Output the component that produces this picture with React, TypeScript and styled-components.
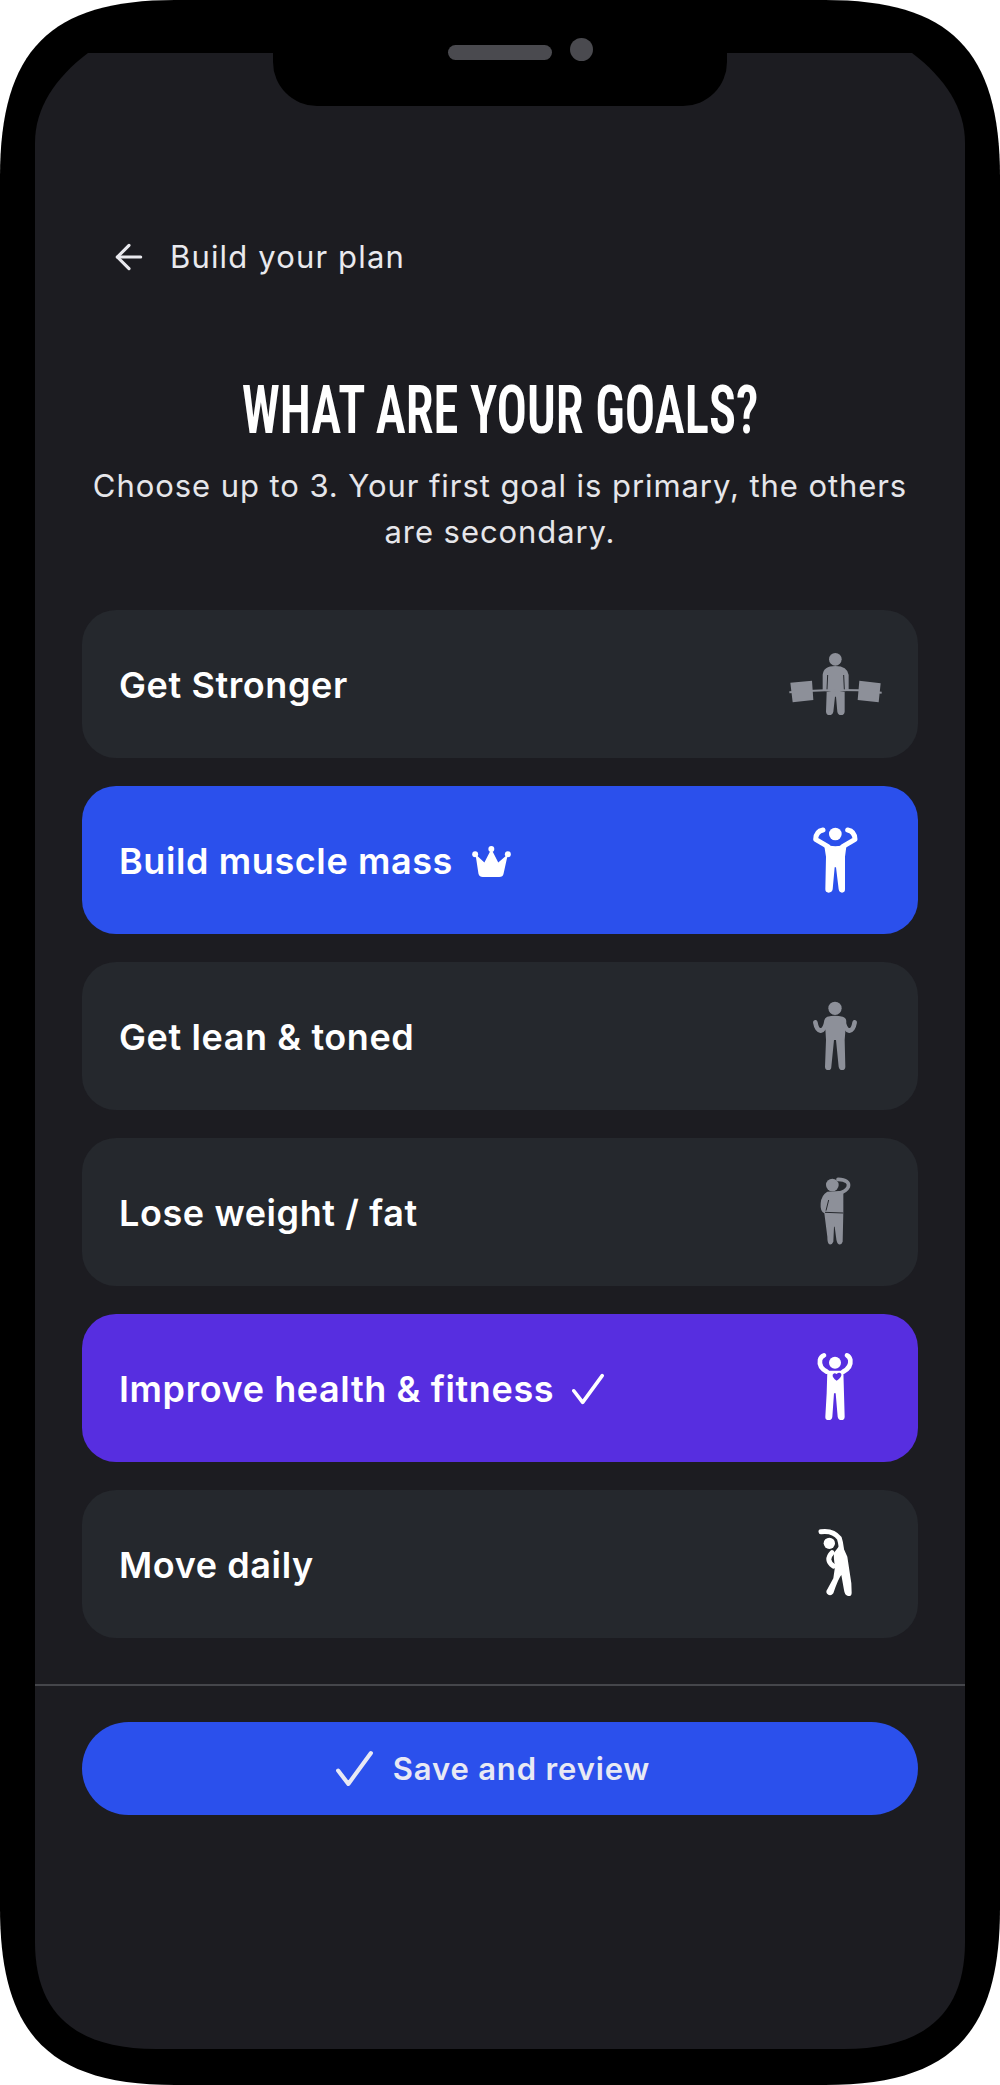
import React from 'react';
import styled, { createGlobalStyle } from 'styled-components';
import { ArrowLeft } from 'lucide-react';

const GlobalStyle = createGlobalStyle`
  html, body {
    margin: 0;
    padding: 0;
    background: #fff;
  }
  #root {
    width: 1000px;
    height: 2085px;
  }
`;

const Phone = styled.div`
  position: relative;
  width: 1000px;
  height: 2085px;
  box-sizing: border-box;
  padding: 53px 35px 36px;
  background: #000;
  clip-path: path('M175 0 L825 0 C950 0 1000 50 1000 177 L1000 1908 C1000 2035 950 2085 825 2085 L175 2085 C50 2085 0 2035 0 1908 L0 177 C0 50 50 0 175 0 Z');
`;

const Screen = styled.main`
  height: 100%;
  display: flex;
  flex-direction: column;
  background: #1c1c21;
  clip-path: path('M53 0 L877 0 C910 25 930 55 930 90 L930 1889 C930 1960 890 1996 809 1996 L121 1996 C40 1996 0 1960 0 1889 L0 90 C0 55 20 25 53 0 Z');
`;

const Notch = styled.div`
  position: absolute;
  top: 53px;
  left: 273px;
  width: 454px;
  height: 53px;
  background: #000;
  border-radius: 0 0 44px 44px;
`;

const Speaker = styled.div`
  position: absolute;
  top: 45px;
  left: 448px;
  width: 104px;
  height: 15px;
  border-radius: 8px;
  background: #4a4a4f;
`;

const Camera = styled.div`
  position: absolute;
  top: 38px;
  left: 570px;
  width: 23px;
  height: 23px;
  border-radius: 50%;
  background: #4a4a4f;
`;

const BackRow = styled.header`
  display: flex;
  align-items: center;
  gap: 21px;
  height: 46px;
  margin-top: 181px;
  padding-left: 74px;
  color: #e9e9ee;
  font: 400 31px/46px Inter, sans-serif;
  letter-spacing: 1.15px;
`;

const Title = styled.h1`
  margin: 94px 0 0;
  text-align: center;
  color: #fff;
  font: 600 67px/72px Roboto, sans-serif;
  font-stretch: 75%;
  white-space: nowrap;
  transform: scaleX(0.755);
`;

const Subtitle = styled.p`
  margin: 17px 48px 0;
  text-align: center;
  color: #e6e6ea;
  font: 400 31px/46px Inter, sans-serif;
  letter-spacing: 0.93px;
`;

const GoalList = styled.ul`
  list-style: none;
  display: flex;
  flex-direction: column;
  gap: 28px;
  margin: 55px 0 0;
  padding: 0 47px;
`;

const Goal = styled.li<{ $tone: 'plain' | 'primary' | 'secondary' }>`
  display: flex;
  align-items: center;
  justify-content: space-between;
  height: 148px;
  padding: 0 33px 0 37px;
  border-radius: 34px;
  background: ${p => (p.$tone === 'primary' ? '#2b50ec' : p.$tone === 'secondary' ? '#572ee0' : '#25282d')};
`;

const GoalLabel = styled.span`
  display: flex;
  align-items: center;
  gap: 18px;
  padding-top: 2px;
  color: #fff;
  font: 600 36px/44px Inter, sans-serif;
  letter-spacing: 0.6px;
`;

const FigureIcon = styled.svg<{ $color: string }>`
  display: block;
  width: 100px;
  height: 80px;
  color: ${p => p.$color};
  fill: currentColor;
`;

const Divider = styled.hr`
  height: 2px;
  margin: 46px 0 0;
  border: 0;
  background: #45464b;
`;

const SaveButton = styled.button`
  display: flex;
  align-items: center;
  justify-content: center;
  gap: 20px;
  height: 93px;
  margin: 36px 47px 0;
  padding: 0 14px 0 0;
  border: 0;
  border-radius: 47px;
  background: #2b50ec;
  color: #e8e9f4;
  font: 600 31px/40px Inter, sans-serif;
  letter-spacing: 0.85px;
`;

const GRAY = '#8d9099';
const WHITE = '#ffffff';

const Lifter = () => (
  <FigureIcon $color={GRAY} viewBox="105 42 300 240">
    <circle cx="256" cy="88" r="19" />
    <path d="M218 180 L218 135 Q220 108 256 108 Q292 108 296 135 L296 180 Q284 186 256 186 Q230 186 218 180 Z" />
    <path d="M230 186 L284 186 L284 245 Q283 255 273 255 Q264 255 262 245 L258 200 L255 200 L250 245 Q248 255 238 255 Q229 255 228 245 Z" />
    <path d="M118 187 L190 182 Q256 178 325 181 L395 188" fill="none" stroke="currentColor" strokeWidth="6" />
    <path d="M121 158 L186 152 L190 210 L128 217 Z M328 152 L392 160 L386 217 L323 210 Z" />
    <path d="M233 135 L231 178 M281 135 L283 178" fill="none" stroke="#25282d" strokeWidth="3" />
  </FigureIcon>
);

const Flexer = () => (
  <FigureIcon $color={WHITE} viewBox="105 570 300 240">
    <circle cx="256" cy="612" r="19" />
    <path d="M222 642 Q256 656 290 642 L285 680 L285 778 Q285 788 276 788 Q268 788 266 778 L258 712 L254 712 L248 778 Q246 788 236 788 Q226 788 226 778 L228 680 Z" />
    <path d="M234 650 L197 628 Q198 604 219 600 M278 650 L315 628 Q314 604 293 600" fill="none" stroke="currentColor" strokeWidth="15" strokeLinecap="round" strokeLinejoin="round" />
  </FigureIcon>
);

const LeanMan = () => (
  <FigureIcon $color={GRAY} viewBox="45 48 300 240">
    <circle cx="195" cy="85" r="20" />
    <path d="M172 110 Q195 105 218 110 Q232 114 228 130 L224 180 L226 260 Q226 270 216 270 Q208 270 206 260 L198 180 L192 180 L184 260 Q184 270 175 270 Q165 270 165 260 L168 180 L165 130 Q162 114 172 110 Z" />
    <path d="M170 122 Q165 150 152 152 Q140 150 136 127 M220 122 Q225 150 238 152 Q250 150 254 127" fill="none" stroke="currentColor" strokeWidth="14" strokeLinecap="round" />
  </FigureIcon>
);

const Scratcher = () => (
  <FigureIcon $color={GRAY} viewBox="45 576 300 240">
    <circle cx="187" cy="615" r="19" />
    <path d="M204 598 Q240 600 235 620 Q228 635 205 640" fill="none" stroke="currentColor" strokeWidth="11" strokeLinecap="round" />
    <path d="M172 635 L220 632 L220 697 L218 785 Q215 795 206 793 Q200 790 198 770 L194 740 L192 740 L190 785 Q186 795 178 793 Q172 790 172 770 L163 700 Q150 695 152 670 Q154 645 172 635 Z" />
    <path d="M165 697 L220 699 M176 660 L168 692" fill="none" stroke="#25282d" strokeWidth="3" />
  </FigureIcon>
);

const HeartMan = () => (
  <FigureIcon $color={WHITE} viewBox="45 54 300 240">
    <circle cx="195" cy="98" r="18" />
    <path d="M170 125 Q146 112 150 90 Q152 80 162 76 M220 125 Q244 112 241 90 Q239 80 231 76" fill="none" stroke="currentColor" strokeWidth="14" strokeLinecap="round" />
    <path d="M172 122 L220 122 L224 260 Q224 270 214 270 Q205 270 203 260 L197 190 L192 190 L187 260 Q186 270 176 270 Q165 270 166 260 L170 190 Z" />
    <path d="M200 152 Q186 142 188 134 Q192 126 200 132 Q208 124 214 132 Q216 142 200 152 Z" fill="#572ee0" />
  </FigureIcon>
);

const Stretcher = () => (
  <FigureIcon $color={WHITE} viewBox="45 582 300 240">
    <circle cx="178" cy="640" r="17" />
    <path d="M153 605 Q190 600 208 625 Q216 650 214 680 M186 668 Q165 690 190 708" fill="none" stroke="currentColor" strokeWidth="15" strokeLinecap="round" />
    <path d="M192 668 L214 640 L232 680 L244 760 L245 788 Q245 800 234 798 Q224 796 222 780 L214 735 Q205 745 190 790 Q182 800 172 792 Q166 786 172 778 L190 745 L195 710 Q190 680 192 668 Z" />
  </FigureIcon>
);

const Crown = () => (
  <svg width="41" height="33" viewBox="1230 185 123 100" fill="#fff">
    <circle cx="1291" cy="197" r="9" />
    <circle cx="1242" cy="213" r="9" />
    <circle cx="1341" cy="213" r="9" />
    <path d="M1243 213 L1270 238 L1291 197 L1312 238 L1341 213 L1328 272 Q1326 282 1315 282 L1265 282 Q1255 282 1252 272 Z" />
  </svg>
);

const Tick = ({ size }: { size: number }) => (
  <svg width={size} height={size} viewBox="0 0 36 36" fill="none" stroke="currentColor" strokeWidth={4} strokeLinecap="round" strokeLinejoin="round">
    <path d="M2 20 L12 33 L34 3" />
  </svg>
);

const goals = [
  { label: 'Get Stronger', tone: 'plain', icon: <Lifter /> },
  { label: 'Build muscle mass', tone: 'primary', icon: <Flexer />, mark: <Crown /> },
  { label: 'Get lean & toned', tone: 'plain', icon: <LeanMan /> },
  { label: 'Lose weight / fat', tone: 'plain', icon: <Scratcher /> },
  { label: 'Improve health & fitness', tone: 'secondary', icon: <HeartMan />, mark: <Tick size={32} /> },
  { label: 'Move daily', tone: 'plain', icon: <Stretcher /> },
] as const;

export default function App() {
  return (
    <>
      <GlobalStyle />
      <Phone>
        <Screen>
          <BackRow>
            <ArrowLeft size={40} strokeWidth={1.9} />
            <span>Build your plan</span>
          </BackRow>
          <Title>WHAT ARE YOUR GOALS?</Title>
          <Subtitle>Choose up to 3. Your first goal is primary, the others are secondary.</Subtitle>
          <GoalList>
            {goals.map(goal => (
              <Goal key={goal.label} $tone={goal.tone}>
                <GoalLabel>
                  {goal.label}
                  {'mark' in goal ? goal.mark : null}
                </GoalLabel>
                {goal.icon}
              </Goal>
            ))}
          </GoalList>
          <Divider />
          <SaveButton>
            <Tick size={37} />
            Save and review
          </SaveButton>
        </Screen>
        <Notch />
        <Speaker />
        <Camera />
      </Phone>
    </>
  );
}
